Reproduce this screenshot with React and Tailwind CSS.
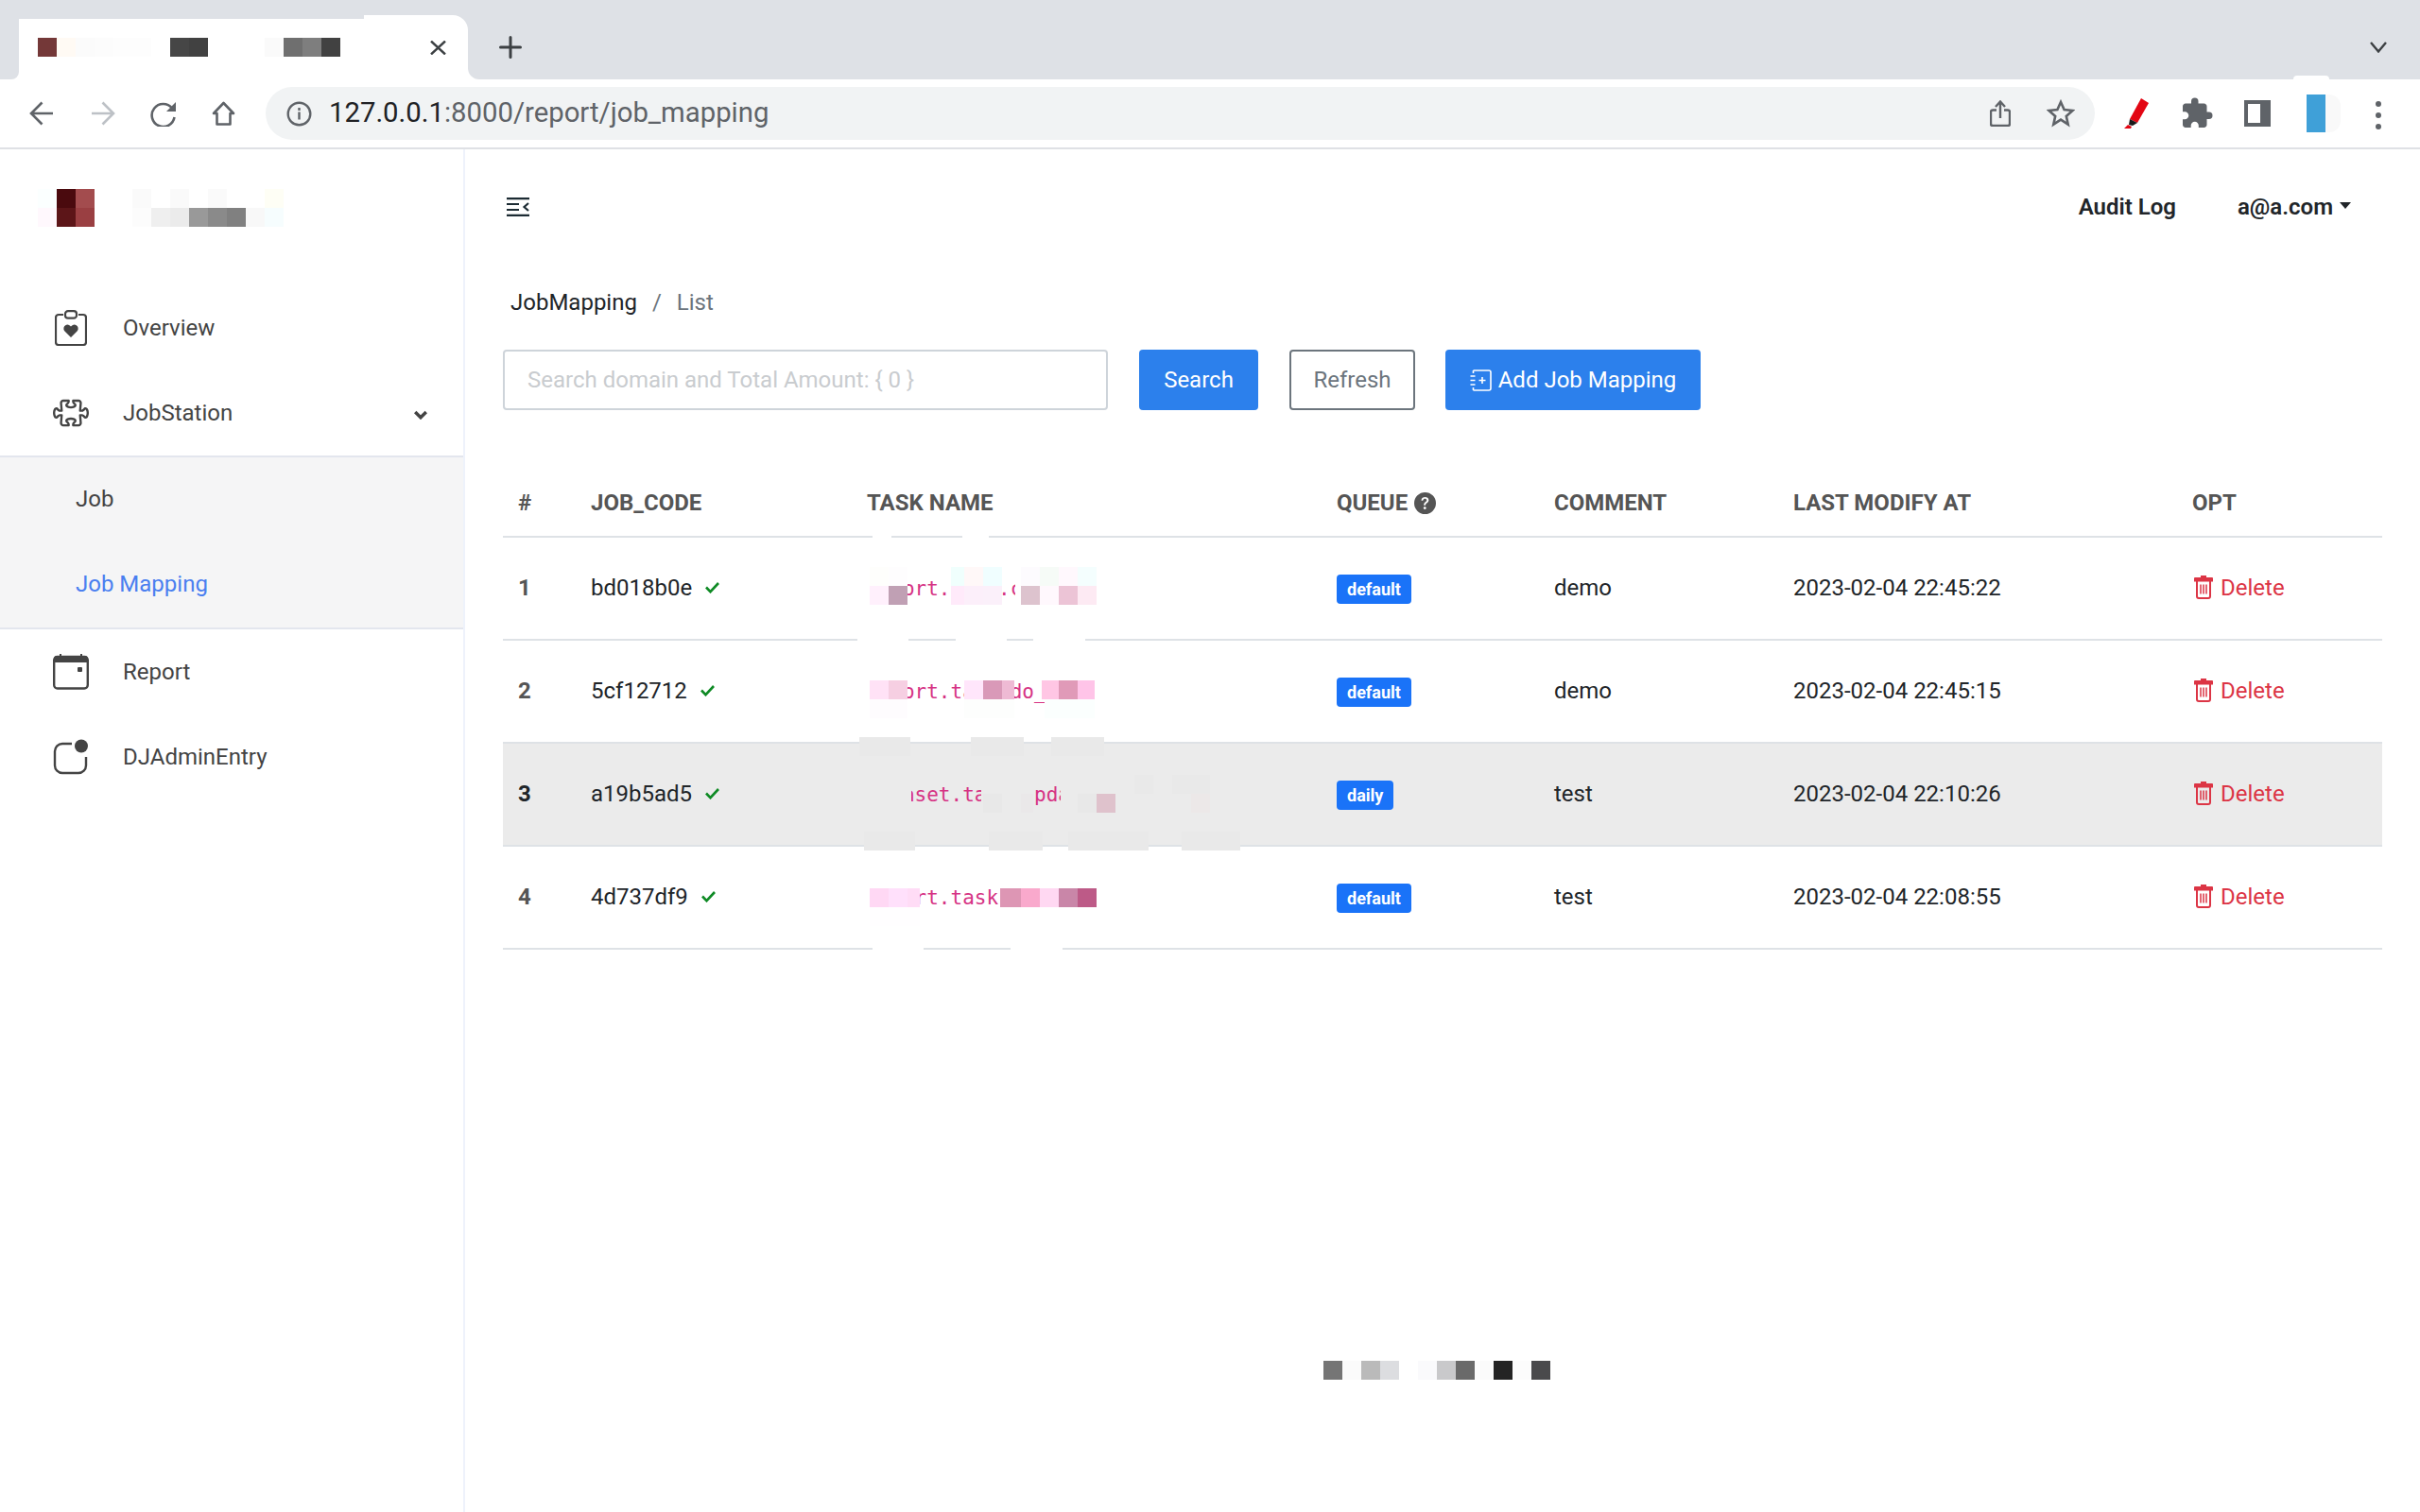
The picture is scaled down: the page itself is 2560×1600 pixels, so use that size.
import { BsPuzzle, BsQuestionCircleFill } from "react-icons/bs";
import { MdExtension } from "react-icons/md";

const logoCells = [
  ["#fbffff", "#4a0a0e", "#a34c4e"],
  ["#fff8fd", "#5c1518", "#9a3f42"],
];
const brandCells = [
  ["#fafafa", "#ffffff", "#fafafa", "#ffffff", "#fafafa", "#ffffff", "#ffffff", "#fefef5"],
  ["#fcfcfc", "#efefef", "#ebebeb", "#999999", "#8a8a8a", "#808080", "#f8f8f8", "#f6fdfe"],
];
const tabCells = [
  ["#743838", "#fffaf4", "#fbfbfb", "#fcfcfc", "#fdfdfd", "#fdfdfd", "#ffffff", "#464646", "#414141", "#ffffff", "#ffffff", "#ffffff", "#fafafa", "#6f6f6f", "#7e7e7e", "#414141"],
];
const footerCells = [
  ["#757575", "#fbfbfb", "#bababa", "#dcdde0", "#ffffff", "#fafafc", "#c9c9cb", "#6a6a6a", "#fbfbfb", "#242424", "#fcfcfc", "#4a4a4c"],
];

// blurred patches over the table, page coordinates: x, y, w, h, colour
const patches = [
  // header line / row 1
  [923, 566, 20, 3, "#ffffff"], [1018, 566, 28, 3, "#ffffff"],
  [920, 600, 20, 20, "#fefefc"], [940, 600, 20, 20, "#fefdfe"],
  [1006, 600, 14, 20, "#f0fffd"], [1020, 600, 20, 20, "#fff8f8"], [1040, 600, 20, 20, "#f0feff"],
  [1080, 600, 20, 20, "#fdfbfe"], [1100, 600, 20, 20, "#f6fbf7"], [1120, 600, 20, 20, "#fff8fd"], [1140, 600, 20, 20, "#f4fefe"],
  [920, 620, 20, 20, "#fff0fc"], [940, 620, 20, 20, "#c0a0b4"],
  [1006, 620, 14, 20, "#ffeafa"], [1020, 620, 20, 20, "#fceffa"], [1040, 620, 20, 20, "#fbf0fa"],
  [1074, 612, 6, 28, "#ffffff"],
  [1080, 620, 20, 20, "#ddc3ce"], [1100, 620, 20, 20, "#fff8fd"], [1120, 620, 20, 20, "#ecc4d6"], [1140, 620, 20, 20, "#fdeaf3"],
  [907, 675, 54, 3, "#ffffff"], [1011, 675, 54, 3, "#ffffff"], [1093, 675, 55, 3, "#ffffff"],
  // row 2
  [920, 720, 20, 20, "#ffe2f6"], [940, 720, 20, 20, "#f6cfe2"],
  [1020, 720, 20, 20, "#ffe6fb"], [1040, 720, 20, 20, "#d999b8"], [1060, 720, 13, 20, "#eebad4"],
  [1102, 720, 18, 20, "#ffc6e4"], [1120, 720, 20, 20, "#e09ab8"], [1140, 720, 18, 20, "#ffc4e8"],
  [920, 740, 40, 20, "#fefcfe"], [1020, 740, 53, 20, "#fdfefd"], [1105, 740, 53, 20, "#fbfffe"],
  // row 3
  [909, 780, 54, 20, "#e9e9e9"], [1027, 780, 56, 20, "#e9e9e9"], [1112, 780, 56, 20, "#e9e9e9"],
  [917, 825, 47, 35, "#ebebeb"], [1038, 825, 55, 35, "#ebebeb"], [1122, 825, 18, 35, "#ebebeb"],
  [1040, 840, 20, 20, "#e8e8e8"], [1080, 840, 13, 20, "#eae8e9"], [1140, 840, 20, 20, "#e8e8e8"], [1160, 840, 20, 20, "#dfc2cc"],
  [1200, 820, 20, 20, "#e9e9e9"], [1240, 820, 40, 20, "#e9e9e9"], [1260, 840, 20, 20, "#ece8e8"],
  [914, 880, 54, 20, "#e9e9e9"], [1046, 880, 57, 20, "#e9e9e9"], [1130, 880, 85, 20, "#e9e9e9"], [1250, 880, 62, 20, "#e9e9e9"],
  // row 4
  [920, 940, 20, 20, "#ffd8f4"], [940, 940, 20, 20, "#ffe0fb"], [960, 940, 13, 20, "#ffdcf6"],
  [1058, 940, 22, 20, "#dd96b4"], [1080, 940, 20, 20, "#f9a9cc"], [1100, 940, 20, 20, "#ffd8f2"], [1120, 940, 20, 20, "#c986a8"], [1140, 940, 20, 20, "#bd5a87"],
  [920, 960, 53, 20, "#fffeff"],
  [923, 1003, 54, 3, "#ffffff"], [1069, 1003, 55, 3, "#ffffff"],
];

const rows = [
  { n: 1, code: "bd018b0e", task: "report.task.c", queue: "default", comment: "demo", at: "2023-02-04 22:45:22" },
  { n: 2, code: "5cf12712", task: "report.task_do_", queue: "default", comment: "demo", at: "2023-02-04 22:45:15" },
  { n: 3, code: "a19b5ad5", task: "dataset.task.upda", queue: "daily", comment: "test", at: "2023-02-04 22:10:26", active: true },
  { n: 4, code: "4d737df9", task: "report.task", queue: "default", comment: "test", at: "2023-02-04 22:08:55" },
];

function Mosaic({ cells }) {
  return (
    <div className="flex flex-col">
      {cells.map((row, i) => (
        <div key={i} className="flex">
          {row.map((c, j) => (
            <div key={j} className="h-5 w-5" style={{ background: c }} />
          ))}
        </div>
      ))}
    </div>
  );
}

function ChromeBar() {
  return (
    <div>
      <div className="flex h-[84px] items-end justify-between bg-[#dee1e6]">
        <div className="flex items-end">
          <div className="relative ml-5 flex h-[68px] w-[475px] rounded-tr-2xl bg-white pl-5 pt-6">
            <div className="absolute left-0 top-0 h-1 w-[365px] bg-[#dee1e6]" />
            <div className="absolute -left-2 bottom-0 h-3.5 w-2 bg-white">
              <div className="h-full w-full rounded-br-xl bg-[#dee1e6]" />
            </div>
            <div className="absolute -right-3 bottom-0 h-3.5 w-3 bg-white">
              <div className="h-full w-full rounded-bl-xl bg-[#dee1e6]" />
            </div>
            <Mosaic cells={tabCells} />
            <svg className="absolute left-[435px] top-[27px] h-[15px] w-[17px]" viewBox="0 0 17 15" fill="none" stroke="#3c4043" strokeWidth="2.4">
              <path d="M1 0.5 16 14.5M16 0.5 1 14.5" />
            </svg>
          </div>
          <svg className="mb-[22px] ml-[33px] h-6 w-6" viewBox="0 0 24 24" fill="none" stroke="#3c4043" strokeWidth="3" strokeLinecap="round">
            <path d="M12 1.5v21M1.5 12h21" />
          </svg>
        </div>
        <svg className="mb-7 mr-[35px] h-3 w-[18px]" viewBox="0 0 18 12" fill="none" stroke="#3c4043" strokeWidth="2.4">
          <path d="M1 1l8 9.5L17 1" />
        </svg>
      </div>
      <div className="relative flex h-[74px] items-start border-b-2 border-[#dfe1e5] bg-white pl-[31px] pt-2">
        <div className="absolute -top-1 left-[2426px] h-1 w-[38px] rounded-t bg-white" />
        <svg className="mt-[15px] h-[26px] w-[26px]" viewBox="0 0 26 26" fill="none" stroke="#5f6368" strokeWidth="2.6">
          <path d="M25 13H3M13.5 1.5 2 13l11.5 11.5" />
        </svg>
        <svg className="ml-[39px] mt-[15px] h-[26px] w-[26px]" viewBox="0 0 26 26" fill="none" stroke="#bdc1c6" strokeWidth="2.6">
          <path d="M1 13h22M12.5 1.5 24 13 12.5 24.5" />
        </svg>
        <svg className="ml-[37px] mt-[15px] h-[27px] w-[28px]" viewBox="0 0 28 27" fill="none">
          <path d="M23 7.5A12 12 0 1 0 25.5 17" stroke="#5f6368" strokeWidth="2.6" />
          <path d="M27 1v10H17z" fill="#5f6368" />
        </svg>
        <svg className="ml-[37px] mt-[15px] h-[26px] w-[25px]" viewBox="0 0 25 26" fill="none" stroke="#5f6368" strokeWidth="2.6" strokeLinejoin="round">
          <path d="M12.5 2 23 13h-3.5v11.5h-14V13H2z" />
        </svg>
        <div className="ml-8 flex h-14 w-[1935px] items-center rounded-[28px] bg-[#f1f3f4] pl-[22px] pr-[21px]">
          <svg className="h-[27px] w-[27px]" viewBox="0 0 27 27" fill="none" stroke="#5f6368" strokeWidth="2.4">
            <circle cx="13.5" cy="13.5" r="11.8" />
            <path d="M13.5 11.5v8M13.5 7v3" />
          </svg>
          <span className="ml-[18px] text-[29.3px] leading-none text-[#5f6368]">
            <span className="text-[#202124]">127.0.0.1</span>:8000/report/job_mapping
          </span>
          <svg className="ml-auto h-7 w-[22px]" viewBox="0 0 22 28" fill="none" stroke="#5f6368" strokeWidth="2.4">
            <path d="M7 10.5H3a2 2 0 0 0-2 2V25a2 2 0 0 0 2 2h16a2 2 0 0 0 2-2V12.5a2 2 0 0 0-2-2h-4M11 19V2M6 7l5-5.5L16 7" />
          </svg>
          <svg className="ml-[38px] h-[30px] w-[30px]" viewBox="0 0 30 30" fill="none" stroke="#5f6368" strokeWidth="2.6" strokeLinejoin="miter">
            <path d="M15 3l3.6 8.1 8.9.9-6.7 5.9 1.9 8.7L15 21.6 7.3 26.6l1.9-8.7L2.5 12l8.9-.9z" />
          </svg>
        </div>
        <svg className="ml-[31px] mt-3 h-8 w-[26px]" viewBox="0 0 26 32">
          <path d="M18 0l8 5-12 21-8-4z" fill="#e30613" />
          <path d="M6 22l8 4-5 3-4-1z" fill="#1a1a1a" />
          <path d="M4 28l4 2-1 2H0z" fill="#e30613" />
        </svg>
        <MdExtension className="ml-[33px] mt-[10px] h-9 w-9 text-[#5f6368]" />
        <div className="ml-8 mt-3.5 flex h-7 w-7 justify-start border-y-[4px] border-l-[4px] border-r-[11px] border-[#5f6368] bg-white" />
        <div className="ml-[38px] mt-2 flex">
          <div className="h-10 w-5 bg-[#3fa0d8]" />
          <div className="h-10 w-4 rounded-r-xl bg-[#f9f9f9]" />
        </div>
        <div className="ml-[37px] mt-[15px] flex flex-col gap-1.5">
          <span className="h-1.5 w-1.5 rounded-full bg-[#5f6368]" />
          <span className="h-1.5 w-1.5 rounded-full bg-[#5f6368]" />
          <span className="h-1.5 w-1.5 rounded-full bg-[#5f6368]" />
        </div>
      </div>
    </div>
  );
}

function NavItem({ icon, label, chevron }) {
  return (
    <div className="flex h-[90px] items-center">
      <div className="flex w-[130px] justify-center pl-5">{icon}</div>
      <span>{label}</span>
      {chevron && (
        <svg className="ml-auto mr-[38px] mt-1 h-[10px] w-[14px]" viewBox="0 0 14 10" fill="none" stroke="#444" strokeWidth="3.4">
          <path d="M1.2 2 7 7.8 12.8 2" />
        </svg>
      )}
    </div>
  );
}

function Sidebar() {
  return (
    <aside className="w-[492px] shrink-0 border-r-2 border-[#eef2fb] pt-[42px] text-[24px] text-[#444]">
      <div className="flex gap-10 pl-10">
        <Mosaic cells={logoCells} />
        <Mosaic cells={brandCells} />
      </div>
      <nav className="mt-[62px]">
        <NavItem
          label="Overview"
          icon={
            <svg className="h-[38px] w-[34px]" viewBox="0 0 34 38" fill="none" stroke="#444" strokeWidth="2.2">
              <path d="M9 5H4a3 3 0 0 0-3 3v26a3 3 0 0 0 3 3h26a3 3 0 0 0 3-3V8a3 3 0 0 0-3-3h-5" />
              <rect x="11" y="1.2" width="12" height="7.5" rx="3" />
              <path d="M17 29l-7-7a4 4 0 0 1 7-4.5 4 4 0 0 1 7 4.500z" fill="#444" stroke="none" />
            </svg>
          }
        />
        <NavItem label="JobStation" chevron icon={<BsPuzzle className="h-[38px] w-[38px] text-[#444]" />} />
        <div className="border-y-2 border-[#e3e6ee] bg-[#f5f5f6]">
          <div className="flex h-[88px] items-center pl-20">Job</div>
          <div className="flex h-[92px] items-center pl-20 text-[#4a7ff0]">Job Mapping</div>
        </div>
        <NavItem
          label="Report"
          icon={
            <svg className="h-[38px] w-[38px]" viewBox="0 0 38 38" fill="none">
              <rect x="1.200" y="3" width="35.600" height="33.500" rx="3.500" stroke="#444" strokeWidth="2.400" />
              <path d="M1 9V5a3 3 0 0 1 3-3h3V0h2v2h20V0h2v2h3a3 3 0 0 1 3 3v4z" fill="#444" />
              <rect x="26" y="14" width="5" height="5" rx="1" fill="#444" />
            </svg>
          }
        />
        <NavItem
          label="DJAdminEntry"
          icon={
            <svg className="h-[38px] w-[38px]" viewBox="0 0 38 38" fill="none">
              <path d="M20 5H10a8 8 0 0 0-8 8v15a8 8 0 0 0 8 8h17a8 8 0 0 0 8-8V19" stroke="#444" strokeWidth="2.400" />
              <circle cx="30" cy="7.500" r="7" fill="#444" />
            </svg>
          }
        />
      </nav>
    </aside>
  );
}

function Toolbar() {
  return (
    <div className="mt-2.5 flex h-16 items-stretch text-[24px]">
      <input
        readOnly
        placeholder="Search domain and Total Amount: { 0 }"
        className="h-16 w-[640px] rounded border-2 border-[#ced4da] px-6 text-[24px] outline-none placeholder:text-[#c9cccf]"
      />
      <button className="ml-[33px] w-[126px] rounded bg-[#2c80ec] text-white">Search</button>
      <button className="ml-[33px] w-[133px] rounded border-2 border-[#6c757d] text-[#6c757d]">Refresh</button>
      <button className="ml-8 flex w-[270px] items-center justify-center gap-[7px] rounded bg-[#2c80ec] text-white">
        <svg className="h-[23px] w-[23px]" viewBox="0 0 23 23" fill="none" stroke="#fff" strokeWidth="1.6">
          <path d="M3.500 1H20a2 2 0 0 1 2 2v17a2 2 0 0 1-2 2H3.500M3.500 1v3M3.500 19v3M0.500 7h5M0.500 11.500h5M0.500 16h5M13 8v7M9.500 11.500h7" />
        </svg>
        Add Job Mapping
      </button>
    </div>
  );
}

function JobTable() {
  return (
    <div className="relative mt-[63px]">
      <table className="w-full table-fixed border-collapse text-left text-[24px] text-[#212529]">
        <colgroup>
          <col className="w-[77px]" />
          <col className="w-[292px]" />
          <col className="w-[497px]" />
          <col className="w-[230px]" />
          <col className="w-[253px]" />
          <col className="w-[422px]" />
          <col />
        </colgroup>
        <thead>
          <tr className="h-[71px] border-b-2 border-[#dee2e6] font-bold text-[#555]">
            <th className="pl-4 font-bold">#</th>
            <th className="pl-4 font-bold">JOB_CODE</th>
            <th className="pl-4 font-bold">TASK NAME</th>
            <th className="pl-4 font-bold">
              <span className="flex items-center gap-[7px]">QUEUE<BsQuestionCircleFill className="h-[23px] w-[23px]" /></span>
            </th>
            <th className="pl-4 font-bold">COMMENT</th>
            <th className="pl-4 font-bold">LAST MODIFY AT</th>
            <th className="pl-4 font-bold">OPT</th>
          </tr>
        </thead>
        <tbody>
          {rows.map((r) => (
            <tr key={r.n} className={`h-[109px] border-b-2 border-[#dee2e6] ${r.active ? "bg-[#ebebeb]" : ""}`}>
              <td className={`pb-0.5 pl-4 font-bold ${r.active ? "text-[#212529]" : "text-[#555]"}`}>{r.n}</td>
              <td className="pb-0.5 pl-4">
                <span className="flex items-center gap-3.5">
                  {r.code}
                  <svg className="h-3 w-[15px]" viewBox="0 0 15 12" fill="none" stroke="#0e8a24" strokeWidth="2.600">
                    <path d="M1 5.500 5.500 10.200 14 1" />
                  </svg>
                </span>
              </td>
              <td className="pb-0.5 pl-4">
                <code className="font-['DejaVu_Sans_Mono',monospace] text-[21px] text-[#d63384]">{r.task}</code>
              </td>
              <td className="pb-0.5 pl-4">
                <span className="inline-flex h-[31px] items-center rounded bg-[#1a73f8] px-[11px] text-[18px] font-bold text-white">{r.queue}</span>
              </td>
              <td className="pb-0.5 pl-4">{r.comment}</td>
              <td className="pb-0.5 pl-4">{r.at}</td>
              <td className="pb-0.5 pl-[18px] text-[#dc3545]">
                <span className="flex items-center gap-2">
                  <svg className="h-[25px] w-5" viewBox="0 0 20 25" fill="none" stroke="currentColor">
                    <path d="M7 0h6v2h6a1 1 0 0 1 1 1v3.500H0V3a1 1 0 0 1 1-1h6z" fill="currentColor" stroke="none" />
                    <path d="M3 6v16a2 2 0 0 0 2 2h10a2 2 0 0 0 2-2V6" strokeWidth="2" />
                    <path d="M7 9.500v10M10 9.500v10M13 9.500v10" strokeWidth="1.500" />
                  </svg>
                  Delete
                </span>
              </td>
            </tr>
          ))}
        </tbody>
      </table>
      {patches.map(([x, y, w, h, c], i) => (
        <div key={i} className="absolute" style={{ left: x - 532, top: y - 497, width: w, height: h, background: c }} />
      ))}
    </div>
  );
}

export default function App() {
  return (
    <div className="h-[1600px] overflow-hidden bg-white font-['Roboto',sans-serif]">
      <ChromeBar />
      <div className="flex h-[1442px]">
        <Sidebar />
        <main className="flex-1 pl-10 pr-10">
          <header className="flex h-[122px] items-center text-[24px] font-semibold text-[#212529]">
            <svg className="ml-1 mr-auto h-5 w-6" viewBox="0 0 24 20" fill="none" stroke="#1c2b33" strokeWidth="2.200">
              <path d="M0 1.100h24M0 7h13M0 13h13M0 18.900h24M23 6l-4.500 4 4.500 4" />
            </svg>
            <span>Audit Log</span>
            <span className="ml-[65px] mr-[33px] flex items-center gap-[7px]">
              a@a.com
              <span className="mb-1 border-x-[6.500px] border-t-[7px] border-x-transparent border-t-[#212529]" />
            </span>
          </header>
          <div className="flex h-[80px] items-center pl-2 text-[24px]">
            <span className="text-[#212529]">JobMapping</span>
            <span className="mx-4 text-[#6c757d]">/</span>
            <span className="text-[#6c757d]">List</span>
          </div>
          <Toolbar />
          <JobTable />
          <div className="ml-[868px] mt-[435px]">
            <Mosaic cells={footerCells} />
          </div>
        </main>
      </div>
    </div>
  );
}
